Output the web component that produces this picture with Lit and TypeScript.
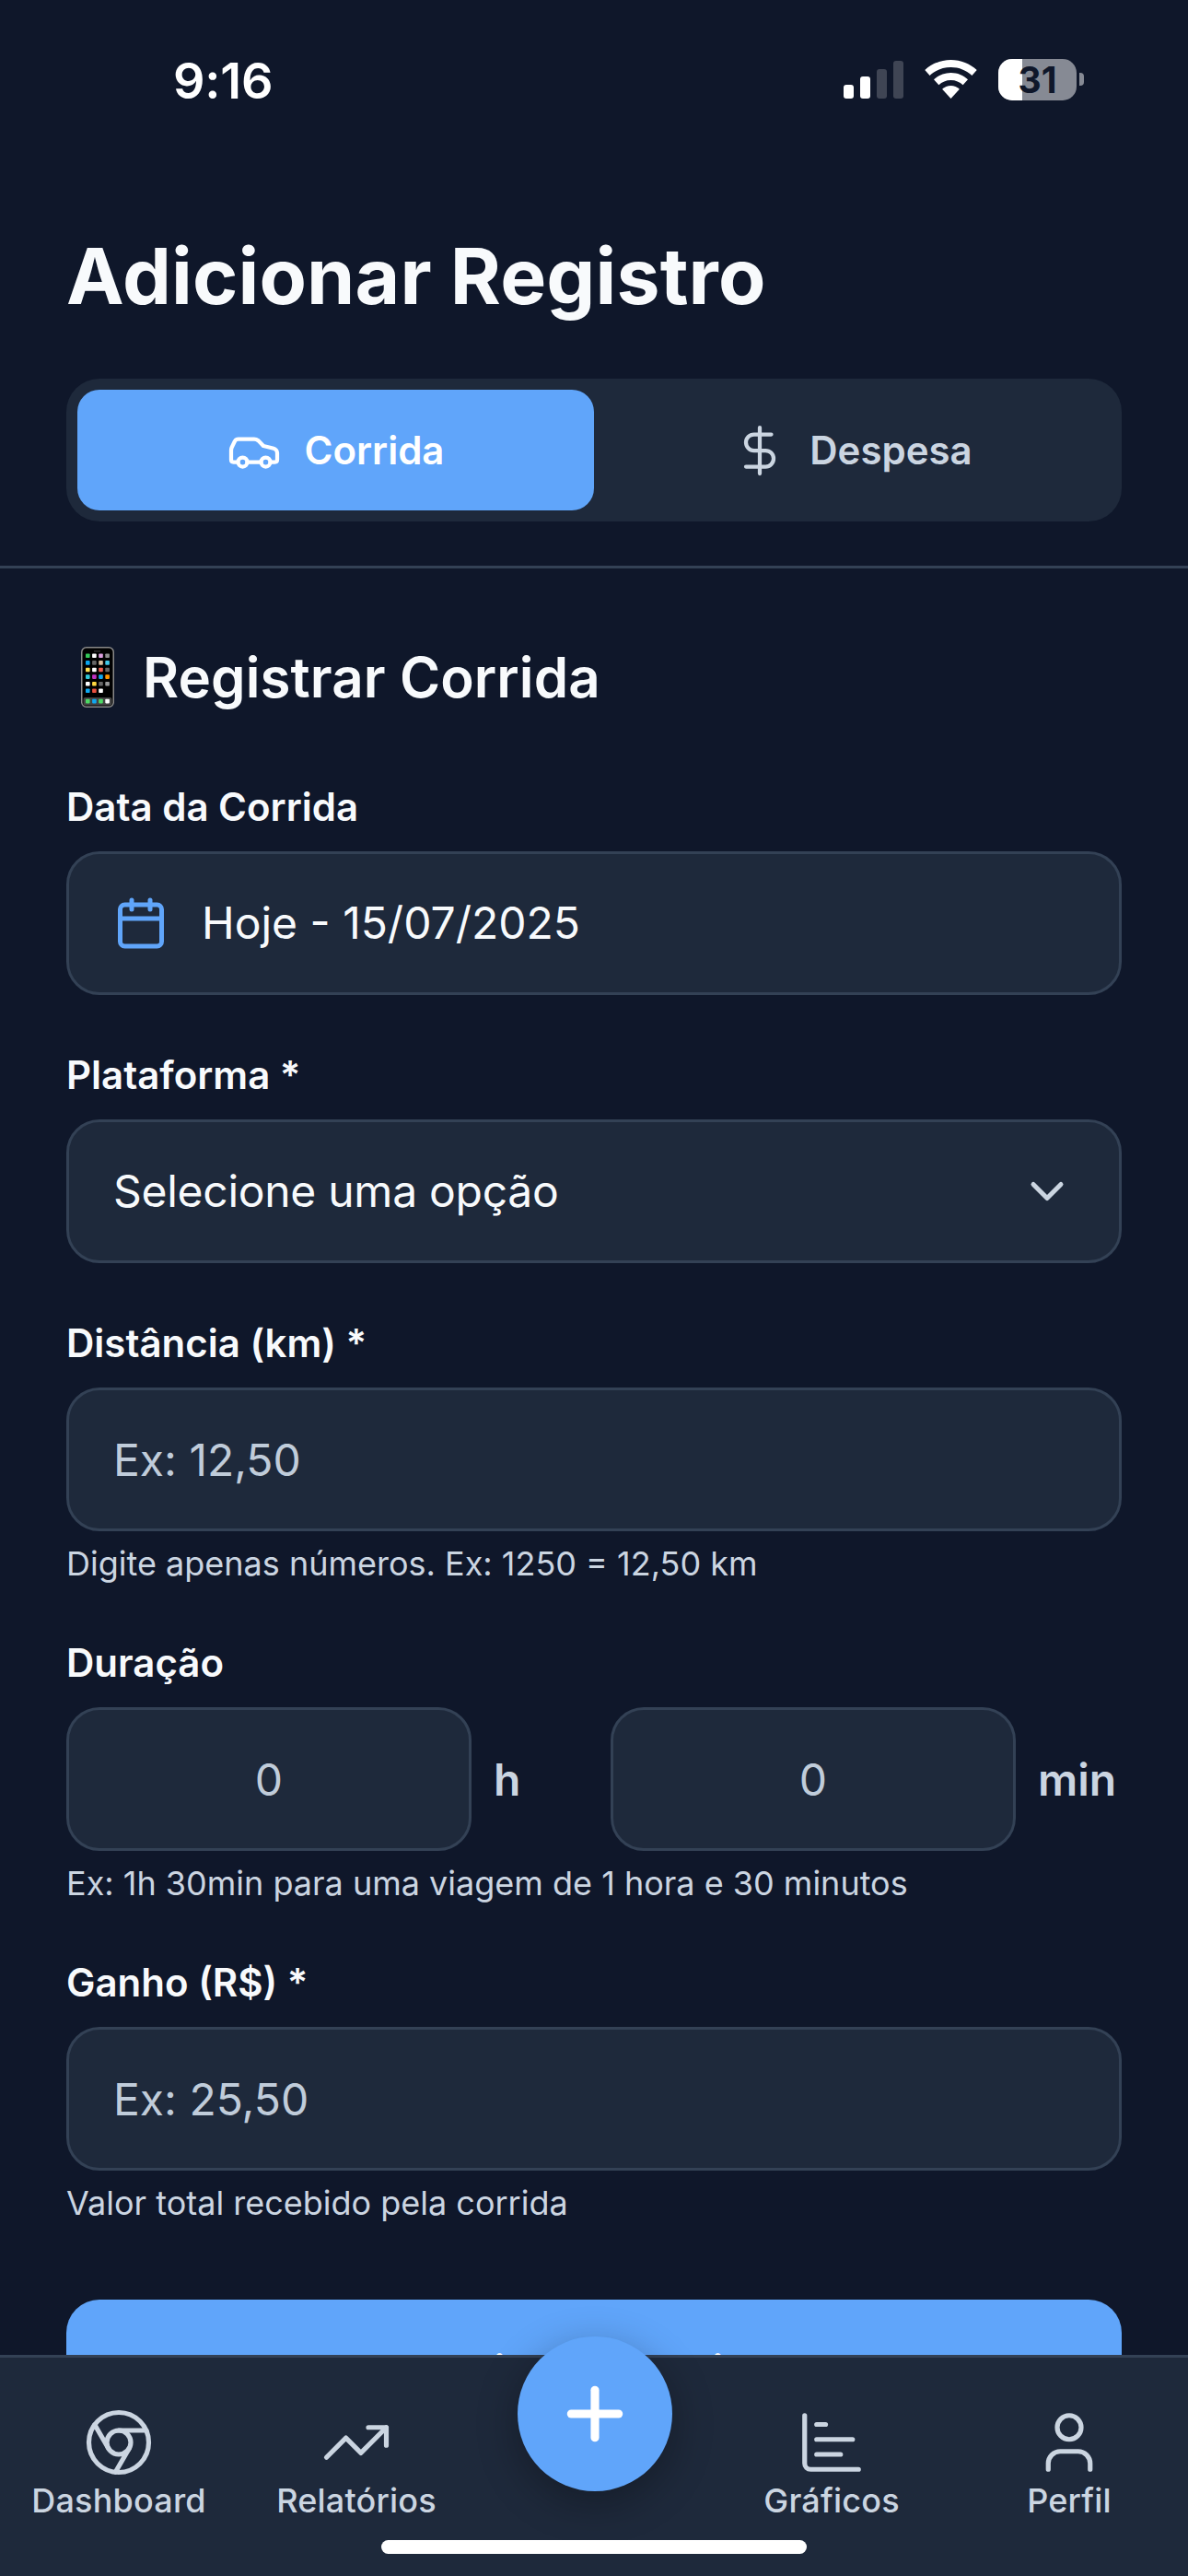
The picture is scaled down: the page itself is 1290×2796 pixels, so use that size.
import { LitElement, html, css, svg } from "lit";
import { customElement } from "lit/decorators.js";

const ic = (size: number, sw: number, body: unknown, cls = "") => html`<svg class=${cls} width=${size} height=${size} viewBox="0 0 24 24" fill="none" stroke="currentColor" stroke-width=${sw} stroke-linecap="round" stroke-linejoin="round">${body}</svg>`;

const car = svg`<path d="M19 17h2c.6 0 1-.4 1-1v-3c0-.9-.7-1.7-1.5-1.9C18.7 10.6 16 10 16 10s-1.3-1.4-2.2-2.3c-.5-.4-1.1-.7-1.8-.7H5c-.6 0-1.1.4-1.4.9l-1.4 2.9A3.7 3.7 0 0 0 2 12v4c0 .6.4 1 1 1h2"/><circle cx="7" cy="17" r="2"/><path d="M9 17h6"/><circle cx="17" cy="17" r="2"/>`;
const dollar = svg`<line x1="12" x2="12" y1="2" y2="22"/><path d="M17 5H9.5a3.5 3.5 0 0 0 0 7h5a3.5 3.5 0 0 1 0 7H6"/>`;
const calendar = svg`<path d="M8 2v4"/><path d="M16 2v4"/><rect width="18" height="18" x="3" y="4" rx="2"/><path d="M3 10h18"/>`;
const chevron = svg`<path d="m6 9 6 6 6-6"/>`;
const chrome = svg`<circle cx="12" cy="12" r="10"/><circle cx="12" cy="12" r="4"/><line x1="21.17" x2="12" y1="8" y2="8"/><line x1="3.95" x2="8.54" y1="6.06" y2="14"/><line x1="10.88" x2="15.46" y1="21.94" y2="14"/>`;
const trend = svg`<polyline points="22 7 13.5 15.5 8.5 10.5 2 17"/><polyline points="16 7 22 7 22 13"/>`;
const chart = svg`<path d="M3 3v16a2 2 0 0 0 2 2h16"/><path d="M7 16h8"/><path d="M7 11h12"/><path d="M7 6h3"/>`;
const user = svg`<path d="M19 21v-2a4 4 0 0 0-4-4H9a4 4 0 0 0-4 4v2"/><circle cx="12" cy="7" r="4"/>`;
const plus = svg`<path d="M5 12h14"/><path d="M12 5v14"/>`;

const appRows = [
  ["#34c759", "#ffffff", "#dc9fe0", "#8e8e8e"],
  ["#0aa5ee", "#666666", "#d8c0a0", "#40c8e8"],
  ["#ffe050", "#ffffff", "#f06050", "#666666"],
  ["#30c8d8", "#c030c0", "#10a8f0", "#ff9500"],
  ["#ffffff", "#ffd840", "#666666", "#999999"],
  ["#10a8f0", "#e85040", "#ffffff", ""],
];
const dock = ["#4cd964", "#10a8f0", "#4cd964", "#ffffff"];

const phone = html`<svg class="emoji" width="36" height="66" viewBox="0 0 36 66">
  <rect x="0.75" y="0.75" width="34.5" height="64.5" rx="5" fill="#000" stroke="#8a8a8a" stroke-width="1.5"/>
  <rect x="14" y="4" width="7" height="1.6" fill="#2a2a2a"/>
  ${appRows.map((row, r) => row.map((c, i) => c ? svg`<rect x=${5 + i * 7.1} y=${7.5 + r * 7.6} width="4.6" height="4.6" rx="0.8" fill=${c}/>` : ""))}
  <rect x="2.5" y="55" width="31" height="8.5" rx="2" fill="#444"/>
  ${dock.map((c, i) => svg`<rect x=${5 + i * 7.1} y="56.8" width="4.6" height="4.6" rx="0.8" fill=${c}/>`)}
</svg>`;

@customElement("app-root")
export class AppRoot extends LitElement {
  static styles = css`
    :host { display: block; width: 1290px; height: 2796px; font-family: Inter, "Liberation Sans", sans-serif; }
    * { box-sizing: border-box; }
    .screen { position: relative; width: 1290px; height: 2796px; overflow: hidden; background: #0f172a; color: #f8fafc; }

    .status { height: 132px; display: flex; justify-content: space-between; padding: 0 113px 0 188px; align-items: flex-start; }
    .time { font-size: 54px; font-weight: 600; line-height: 54px; margin-top: 61px; letter-spacing: -0.2px; color: #fff; }
    .sys { display: flex; align-items: flex-start; margin-top: 64px; }
    .signal { display: flex; align-items: flex-end; gap: 7px; height: 43px; margin-top: 0; }
    .signal i { display: block; width: 11px; border-radius: 3px; background: rgba(255,255,255,.2); }
    .signal i.on { background: #fff; }
    .wifi { margin-left: 23px; margin-top: 1px; display: block; }
    .battery { position: relative; margin-left: 23px; width: 85px; height: 45px; border-radius: 15px; overflow: hidden; background: #868a94; text-align: center; font-size: 39px; font-weight: 700; line-height: 45px; color: #0f172a; }
    .battery b { position: absolute; left: 0; top: 0; bottom: 0; width: 26px; background: #fff; }
    .battery span { position: relative; font-weight: 700; margin-left: 0; }
    .nub { width: 5px; height: 14px; margin: 15px 0 0 3px; background: #868a94; border-radius: 0 4px 4px 0; }

    .head { padding: 0 72px 48px; border-bottom: 3px solid #334155; }
    h1 { margin: 117px 0 60px; font-size: 84px; font-weight: 700; line-height: 102px; letter-spacing: 0.15px; color: #f8fafc; }
    .tabs { display: grid; grid-template-columns: 1fr 1fr; padding: 12px; height: 155px; border-radius: 36px; background: #1e293b; }
    .tab { display: flex; align-items: center; justify-content: center; gap: 24px; border-radius: 24px; font-size: 42px; font-weight: 600; color: #cbd5e1; }
    .tab.active { background: #60a5fa; color: #fff; }

    .form { padding: 76px 72px 0; }
    h2 { margin: 0 0 69px; display: flex; align-items: center; font-size: 60px; font-weight: 600; line-height: 84px; letter-spacing: 0.1px; color: #f8fafc; }
    .emoji { margin: 0 31px 0 16px; flex: none; }
    .field { margin-bottom: 57px; }
    label { display: block; margin-bottom: 18px; font-size: 42px; font-weight: 600; line-height: 60px; color: #f8fafc; }
    .box { display: flex; align-items: center; height: 156px; width: 100%; padding: 0 48px; border: 3px solid #334155; border-radius: 36px; background: #1e293b; font: 400 48px/60px Inter, "Liberation Sans", sans-serif; color: #f8fafc; outline: none; }
    .box svg { flex: none; }
    .box.date { gap: 36px; }
    .box.date svg { color: #60a5fa; }
    .box.select { justify-content: space-between; color: #f8fafc; letter-spacing: -0.28px; }
    .box.select svg { color: #cbd5e1; }
    input.box::placeholder { color: #c0ccda; opacity: 1; }
    input.center { text-align: center; padding: 0; }
    .help { margin: 14px 0 0; font-size: 36px; line-height: 42px; color: #cbd5e1; }
    .duration { display: grid; grid-template-columns: 1fr 103px 1fr 91px; align-items: center; column-gap: 24px; }
    .duration .unit { font-size: 48px; font-weight: 600; color: #cbd5e1; }
    .submit { height: 155px; margin-top: 84px; border-radius: 36px; background: #60a5fa; color: #fff; display: flex; align-items: center; justify-content: center; font-size: 48px; font-weight: 600; }

    nav { position: absolute; left: 0; right: 0; bottom: 0; height: 240px; padding-top: 53px; display: grid; grid-template-columns: repeat(5, 1fr); align-items: start; border-top: 3px solid #334155; background: #1e293b; color: #cbd5e1; }
    .item { display: flex; flex-direction: column; align-items: center; font-size: 36px; font-weight: 500; line-height: 48px; letter-spacing: 0.2px; }
    .fab { position: absolute; left: 562px; top: -23px; width: 168px; height: 168px; border-radius: 50%; display: flex; align-items: center; justify-content: center; background: #60a5fa; color: #fff; box-shadow: 0 12px 45px rgba(0,0,0,.3); }
    .home { position: absolute; left: 414px; bottom: 24px; width: 462px; height: 15px; border-radius: 8px; background: #fff; }
  `;

  render() {
    return html`<div class="screen">
      <div class="status">
        <div class="time">9:16</div>
        <div class="sys">
          <div class="signal"><i class="on" style="height:15px"></i><i class="on" style="height:24px"></i><i style="height:32px"></i><i style="height:41px"></i></div>
          <svg class="wifi" width="57" height="42" viewBox="0 0 57 42"><path fill="#fff" d="M28.5 0C17.6 0 7.7 4.2.3 11l5.3 6C11.5 11.400 19.600 8 28.500 8s17 3.400 22.900 9l5.300-6C49.300 4.200 39.400 0 28.500 0z"/><path fill="#fff" d="M28.500 14c-7.200 0-13.700 2.800-18.500 7.300l5.400 6c3.400-3.200 8-5.200 13.100-5.200s9.700 2 13.100 5.200l5.400-6C42.200 16.800 35.700 14 28.500 14z"/><path fill="#fff" d="M28.500 28c-3.600 0-6.900 1.400-9.400 3.700L28.500 42l9.400-10.300C35.400 29.400 32.100 28 28.500 28z"/></svg>
          <div class="battery"><b></b><span>31</span></div>
          <div class="nub"></div>
        </div>
      </div>

      <div class="head">
        <h1>Adicionar Registro</h1>
        <div class="tabs">
          <div class="tab active">${ic(60, 1.7, car)}<span>Corrida</span></div>
          <div class="tab">${ic(60, 1.7, dollar)}<span>Despesa</span></div>
        </div>
      </div>

      <div class="form">
        <h2>${phone}Registrar Corrida</h2>

        <div class="field">
          <label>Data da Corrida</label>
          <div class="box date">${ic(60, 2, calendar)}<span>Hoje - 15/07/2025</span></div>
        </div>

        <div class="field">
          <label>Plataforma *</label>
          <div class="box select"><span>Selecione uma opção</span>${ic(60, 2, chevron)}</div>
        </div>

        <div class="field">
          <label>Distância (km) *</label>
          <input class="box" placeholder="Ex: 12,50" />
          <p class="help">Digite apenas números. Ex: 1250 = 12,50 km</p>
        </div>

        <div class="field">
          <label>Duração</label>
          <div class="duration">
            <input class="box center" placeholder="0" />
            <span class="unit">h</span>
            <input class="box center" placeholder="0" />
            <span class="unit">min</span>
          </div>
          <p class="help">Ex: 1h 30min para uma viagem de 1 hora e 30 minutos</p>
        </div>

        <div class="field">
          <label>Ganho (R$) *</label>
          <input class="box" placeholder="Ex: 25,50" />
          <p class="help">Valor total recebido pela corrida</p>
        </div>

        <div class="submit">Registrar Corrida</div>
      </div>

      <nav>
        <div class="item">${ic(78, 1.6, chrome)}<span>Dashboard</span></div>
        <div class="item">${ic(78, 1.6, trend)}<span>Relatórios</span></div>
        <div></div>
        <div class="item">${ic(78, 1.6, chart)}<span>Gráficos</span></div>
        <div class="item">${ic(78, 1.6, user)}<span>Perfil</span></div>
        <div class="fab">${ic(88, 2.5, plus)}</div>
        <div class="home"></div>
      </nav>
    </div>`;
  }
}
